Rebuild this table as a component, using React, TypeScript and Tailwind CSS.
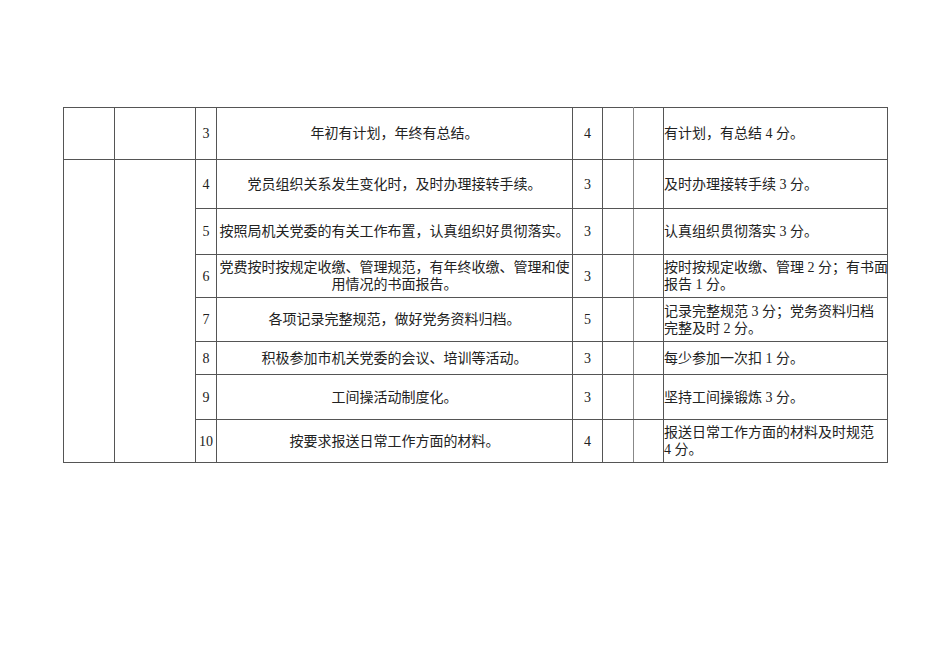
import React from 'react';

const rows = [
  { n: '3', item: ['年初有计划，年终有总结。'], score: '4', note: ['有计划，有总结 4 分。'], h: 'h-[52px]' },
  { n: '4', item: ['党员组织关系发生变化时，及时办理接转手续。'], score: '3', note: ['及时办理接转手续 3 分。'], h: 'h-[49px]' },
  { n: '5', item: ['按照局机关党委的有关工作布置，认真组织好贯彻落实。'], score: '3', note: ['认真组织贯彻落实 3 分。'], h: 'h-[46px]' },
  { n: '6', item: ['党费按时按规定收缴、管理规范，有年终收缴、管理和使', '用情况的书面报告。'], score: '3', note: ['按时按规定收缴、管理 2 分；有书面', '报告 1 分。'], h: 'h-[43px]' },
  { n: '7', item: ['各项记录完整规范，做好党务资料归档。'], score: '5', note: ['记录完整规范 3 分；党务资料归档', '完整及时 2 分。'], h: 'h-[44px]' },
  { n: '8', item: ['积极参加市机关党委的会议、培训等活动。'], score: '3', note: ['每少参加一次扣 1 分。'], h: 'h-[33px]' },
  { n: '9', item: ['工间操活动制度化。'], score: '3', note: ['坚持工间操锻炼 3 分。'], h: 'h-[45px]' },
  { n: '10', item: ['按要求报送日常工作方面的材料。'], score: '4', note: ['报送日常工作方面的材料及时规范', '4 分。'], h: 'h-[43px]' },
];

const cell = 'border border-[#555] p-0 align-middle';

export default function App() {
  return (
    <div className="w-[950px] h-[672px] bg-white pt-[107px] pl-[63px] font-['Liberation_Serif','Noto_Sans_CJK_SC',serif] text-[14px] text-[#222] overflow-hidden">
      <table className="table-fixed border-collapse w-[824px]">
        <colgroup>
          <col className="w-[51px]" />
          <col className="w-[81px]" />
          <col className="w-[21px]" />
          <col className="w-[356px]" />
          <col className="w-[30px]" />
          <col className="w-[31px]" />
          <col className="w-[30px]" />
          <col className="w-[224px]" />
        </colgroup>
        <tbody>
          {rows.map((r, i) => (
            <tr key={r.n} className={r.h}>
              {i === 0 && (
                <>
                  <td className={cell}></td>
                  <td className={cell}></td>
                </>
              )}
              {i === 1 && (
                <>
                  <td className={cell} rowSpan={7}></td>
                  <td className={cell} rowSpan={7}></td>
                </>
              )}
              <td className={`${cell} text-center`}>{r.n}</td>
              <td className={`${cell} border-l-[#888] text-center leading-[17px]`}>
                {r.item.map((t) => (
                  <div key={t} className="whitespace-nowrap">{t}</div>
                ))}
              </td>
              <td className={`${cell} text-center`}>{r.score}</td>
              <td className={`${cell} border-x-[#888]`}></td>
              <td className={cell}></td>
              <td className={`${cell} border-l-[#999] text-left leading-[17px]`}>
                {r.note.map((t) => (
                  <div key={t} className="whitespace-nowrap">{t}</div>
                ))}
              </td>
            </tr>
          ))}
        </tbody>
      </table>
    </div>
  );
}
